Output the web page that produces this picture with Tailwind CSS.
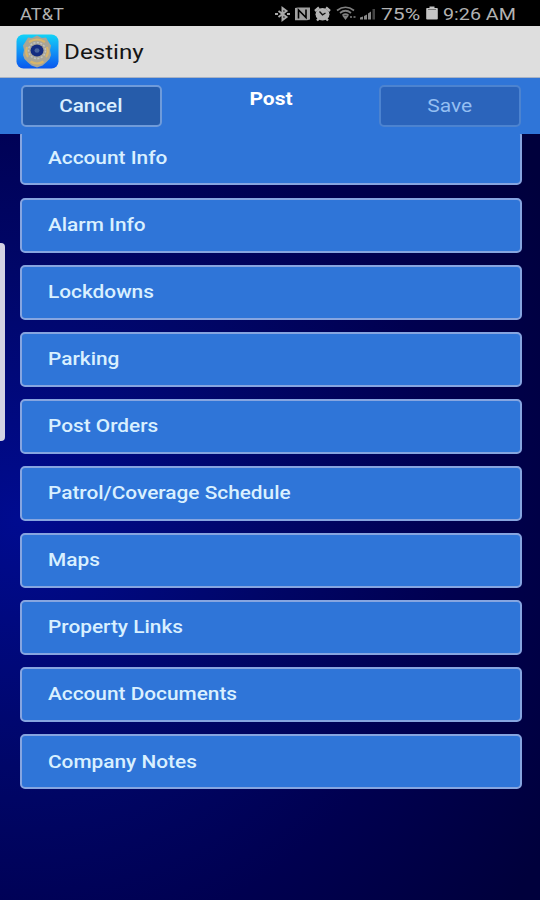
<!DOCTYPE html>
<html lang="en">
<head>
    <meta charset="UTF-8">
    <meta name="viewport" content="width=device-width, initial-scale=1.0">
    <title>Destiny</title>
    <script src="https://cdn.jsdelivr.net/npm/@tailwindcss/browser@4"></script>
</head>
<body class="w-[540px] h-[900px] overflow-hidden bg-[#00003c] font-[Roboto,sans-serif]">
    <div class="relative flex flex-col h-full bg-[radial-gradient(ellipse_620px_620px_at_20px_520px,#000b90_0%,#000668_40%,#000050_70%,#00003c_100%)]">
        <!-- Status bar -->
        <div class="flex items-center justify-between h-[26px] shrink-0 bg-black pl-5 pr-6 pt-[3px] text-[#b2b2b2] text-[16px] leading-none">
            <span class="origin-left scale-x-[1.14]">AT&amp;T</span>
            <div class="flex items-center">
                <svg class="w-[15px] h-4 -ml-px -mt-0.5" viewBox="0 0 15 16" fill="none" stroke="#a9a9a9" stroke-width="2">
                    <path d="M3.500 5l8 6-4 3V2l4 3-8 6"/>
                    <path d="M0 8h3M12 8h3" stroke-width="2"/>
                </svg>
                <svg class="w-[17px] h-4 ml-1 -mt-0.5" viewBox="0 0 17 16">
                    <path d="M1 2l3-.5h12v12l-3 .8H1z" fill="#a0a0a0"/>
                    <path d="M4.500 12.500V4l7.500 7.500V3.500" fill="none" stroke="#000" stroke-width="1.600"/>
                </svg>
                <svg class="w-[17px] h-4 ml-[3px] -mt-0.5" viewBox="0 0 17 16">
                    <path d="M1 5l4-3.500M16 5l-4-3.500M3 14.500l2-2M14 14.500l-2-2" stroke="#b4b4b4" stroke-width="2.400"/>
                    <ellipse cx="8.500" cy="8.300" rx="7" ry="6.200" fill="#b4b4b4"/>
                    <path d="M5.500 5.500l3 3.300 3-1.800" fill="none" stroke="#111" stroke-width="1.300"/>
                </svg>
                <svg class="w-[20px] h-4 ml-[5px] -mt-1" viewBox="0 0 20 16" fill="none" stroke="#808080" stroke-width="1.700">
                    <path d="M1 5.500Q9.500-1 18 5.500M4 8Q9.500 3.500 15 8M6.500 10.500Q9.500 8 12.500 10.500"/>
                    <path d="M8 11.500h3l-1.500 2zM14 12h2M17.500 12h2" fill="#777"/>
                </svg>
                <svg class="w-[16px] h-4 ml-[4px] -mt-1" viewBox="0 0 16 16" fill="#8a8a8a">
                    <path d="M0 14.500v-2l3-1v3zM4 14.500v-3.500l3-1.500v5zM8 14.500V8.500l3-2v8z"/>
                    <path d="M12.500 4H15v10.500h-2.500z" fill="#444"/>
                </svg>
                <span class="w-[41px] ml-[5px]"><span class="block w-max origin-left scale-x-[1.32]">75%</span></span>
                <svg class="w-[12px] h-4 ml-[4px] -mt-1" viewBox="0 0 12 16" fill="#c4c4c4">
                    <path d="M3.500 1.500h5V3H11q.8 0 .8.800v9.900q0 .8-.8.800H1q-.8 0-.8-.8V3.800Q.2 3 1 3h2.500z"/>
                    <path d="M2 4.500h8" stroke="#777" stroke-width="1"/>
                </svg>
                <span class="w-[73px] ml-[5px]"><span class="block w-max origin-left scale-x-[1.23]">9:26 AM</span></span>
            </div>
        </div>

        <!-- App title -->
        <div class="flex items-center h-[52px] shrink-0 bg-[#dedede] border-b border-[#a9b3c4] pl-4">
            <svg class="w-[43px] h-[36px]" viewBox="0 0 43 36">
                <defs>
                    <linearGradient id="tile" x1="0" y1="0" x2="0" y2="1">
                        <stop offset="0" stop-color="#12d3f6"/>
                        <stop offset="0.500" stop-color="#1293f5"/>
                        <stop offset="1" stop-color="#0a56ee"/>
                    </linearGradient>
                </defs>
                <rect x="0.500" y="0.500" width="42" height="34" rx="7" fill="url(#tile)"/>
                <path d="M12 3.500l4 .500 5-2.500 5 2.500 4-.500 3 5 2 3-1 4.500 1 5-1.500 4-3.500 3.500-3.500 3-5.500 2-5.500-2-3.500-3-3.500-3.500-1.500-4 1-5-1-4.500 2-3z" fill="#a9a596"/>
                <path d="M13 8q8-5 16 0M11 13q-2 6 1 10M31 13q2 6-1 10M14.500 27.500q6.500 4 13 0" fill="none" stroke="#d9b66a" stroke-width="2.200"/>
                <ellipse cx="21" cy="16.500" rx="8.500" ry="8" fill="none" stroke="#bfc2c2" stroke-width="1.500" stroke-dasharray="2 1.500"/>
                <ellipse cx="21" cy="16.500" rx="6.500" ry="6" fill="#142c80"/>
                <ellipse cx="21" cy="16.500" rx="2.500" ry="2.300" fill="#49649e"/>
            </svg>
            <span class="ml-[5px] origin-left scale-x-[1.21] text-[20px] leading-none text-[#151515]">Destiny</span>
        </div>

        <!-- Toolbar -->
        <div class="relative z-10 flex justify-between h-[56px] shrink-0 bg-[#2f75d8] pl-[21px] pr-[19px] pt-[7px] text-[17.5px] leading-none">
            <button class="flex items-center justify-center w-[141px] h-[42px] rounded-[5px] border-2 border-[#6f9bda] bg-[#265caa] pt-[1px] pr-[1px] font-medium text-[#d9eeff]">
                <span class="scale-x-[1.18]">Cancel</span>
            </button>
            <h1 class="pt-[6px] font-bold text-white"><span class="block scale-x-[1.2]">Post</span></h1>
            <button class="flex items-center justify-center w-[142px] h-[42px] rounded-[5px] border-2 border-[#4c83d0] bg-[#2b64bb] pt-[1px] text-[#94bff2]">
                <span class="scale-x-[1.2]">Save</span>
            </button>
        </div>

        <!-- Menu -->
        <ul id="menu" class="flex flex-col gap-[12.1px] -mt-[3.6px] pl-5 pr-[18px] text-[17.5px] leading-none font-medium text-[#d9f0ff]"></ul>

        <!-- Edge panel handle -->
        <div class="absolute left-0 top-[243px] w-[5px] h-[198px] rounded-r-[4px] bg-[#d3d3e4]"></div>
    </div>

    <script>
        const items = [
            "Account Info",
            "Alarm Info",
            "Lockdowns",
            "Parking",
            "Post Orders",
            "Patrol/Coverage Schedule",
            "Maps",
            "Property Links",
            "Account Documents",
            "Company Notes"
        ];

        document.getElementById("menu").innerHTML = items.map(item => `
            <li class="flex items-center h-[55px] rounded-[5px] border-2 border-[#86a5e0] bg-[#2f75d8] pt-[1px] pl-[26px]">
                <span class="origin-left scale-x-[1.19]">${item}</span>
            </li>`).join("");
    </script>
</body>
</html>
